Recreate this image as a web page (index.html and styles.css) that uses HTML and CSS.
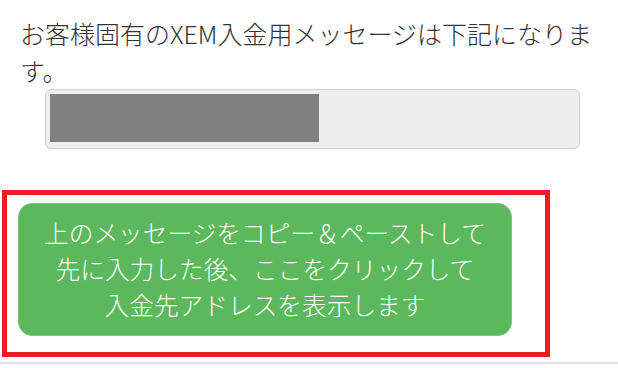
FILE: index.html
```html
<!DOCTYPE html>
<html lang="ja">
<head>
<meta charset="utf-8">
<link rel="stylesheet" href="styles.css">
</head>
<body>
<div class="content">
  <p class="lead">お客様固有のXEM入金用メッセージは下記になります。</p>
  <div class="field"><div class="redact"></div></div>
</div>
<div class="annot">
  <button class="btn" type="button">上のメッセージをコピー＆ペーストして<br>先に入力した後、ここをクリックして<br>入金先アドレスを表示します</button>
</div>
<div class="rule"></div>
</body>
</html>
```
FILE: styles.css
```css
html, body {
  margin: 0;
  padding: 0;
  background: #fff;
  font-family: "Noto Sans CJK JP", "Noto Sans", sans-serif;
}
.content {
  padding: 15px 20px 0 20px;
  width: 578px;
}
.lead {
  margin: 0;
  font-size: 25px;
  font-weight: 300;
  line-height: 37px;
  color: #333;
}
.field {
  margin: 0 18px 0 25px;
  height: 50px;
  padding: 4px 0 4px 4px;
  border: 1px solid #cfcfcf;
  border-radius: 6px;
  background: #eeeeee;
}
.redact {
  width: 269px;
  height: 48px;
  background: #808080;
}
.annot {
  margin: 41px 0 0 2px;
  width: 494px;
  padding: 8px 33px 16px 11px;
  border: 5px solid #ed1c24;
}
.btn {
  display: block;
  width: 494px;
  height: 133px;
  padding: 10px 0 13px;
  border: 1px solid #79c779;
  border-radius: 14px;
  background: #5cb85c;
  color: #fff;
  font-family: "Noto Sans CJK JP", "Noto Sans", sans-serif;
  font-size: 24.7px;
  font-weight: 300;
  line-height: 36px;
  text-align: center;
}
.rule {
  margin-top: 5px;
  height: 2px;
  background: #e3e3e3;
}
```
